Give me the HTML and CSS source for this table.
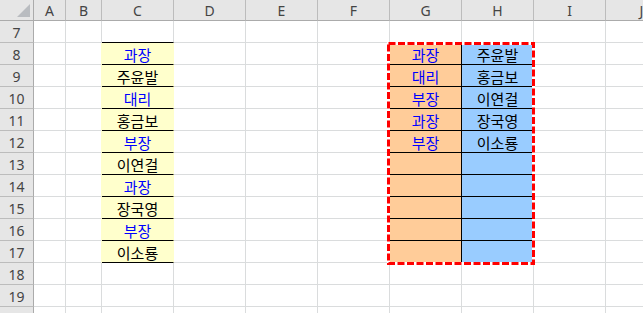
FILE: index.html
```html
<!DOCTYPE html>
<html lang="ko">
<head>
<meta charset="utf-8">
<link rel="stylesheet" href="styles.css">
</head>
<body>
<div class="wrap">
<div class="sheet">
  <div class="corner"><svg class="tri" width="34" height="21" viewBox="0 0 34 21"><polygon points="30,4 30,17 17,17" fill="#b9bcc0"/></svg></div>
  <div class="ch">A</div><div class="ch">B</div><div class="ch">C</div><div class="ch">D</div><div class="ch">E</div><div class="ch">F</div><div class="ch">G</div><div class="ch">H</div><div class="ch">I</div><div class="ch">J</div>

  <div class="rh">7</div><div class="c"></div><div class="c"></div><div class="c bb"></div><div class="c"></div><div class="c"></div><div class="c"></div><div class="c bb"></div><div class="c bb"></div><div class="c"></div><div class="c"></div>

  <div class="rh">8</div><div class="c"></div><div class="c by"></div><div class="c y blue">과장</div><div class="c"></div><div class="c"></div><div class="c br"></div><div class="c g blue">과장</div><div class="c h">주윤발</div><div class="c"></div><div class="c"></div>

  <div class="rh">9</div><div class="c"></div><div class="c by"></div><div class="c y">주윤발</div><div class="c"></div><div class="c"></div><div class="c br"></div><div class="c g blue">대리</div><div class="c h">홍금보</div><div class="c"></div><div class="c"></div>

  <div class="rh">10</div><div class="c"></div><div class="c by"></div><div class="c y blue">대리</div><div class="c"></div><div class="c"></div><div class="c br"></div><div class="c g blue">부장</div><div class="c h">이연걸</div><div class="c"></div><div class="c"></div>

  <div class="rh">11</div><div class="c"></div><div class="c by"></div><div class="c y">홍금보</div><div class="c"></div><div class="c"></div><div class="c br"></div><div class="c g blue">과장</div><div class="c h">장국영</div><div class="c"></div><div class="c"></div>

  <div class="rh">12</div><div class="c"></div><div class="c by"></div><div class="c y blue">부장</div><div class="c"></div><div class="c"></div><div class="c br"></div><div class="c g blue">부장</div><div class="c h">이소룡</div><div class="c"></div><div class="c"></div>

  <div class="rh">13</div><div class="c"></div><div class="c by"></div><div class="c y">이연걸</div><div class="c"></div><div class="c"></div><div class="c br"></div><div class="c g"></div><div class="c h"></div><div class="c"></div><div class="c"></div>

  <div class="rh">14</div><div class="c"></div><div class="c by"></div><div class="c y blue">과장</div><div class="c"></div><div class="c"></div><div class="c br"></div><div class="c g"></div><div class="c h"></div><div class="c"></div><div class="c"></div>

  <div class="rh">15</div><div class="c"></div><div class="c by"></div><div class="c y">장국영</div><div class="c"></div><div class="c"></div><div class="c br"></div><div class="c g"></div><div class="c h"></div><div class="c"></div><div class="c"></div>

  <div class="rh">16</div><div class="c"></div><div class="c by"></div><div class="c y blue">부장</div><div class="c"></div><div class="c"></div><div class="c br"></div><div class="c g"></div><div class="c h"></div><div class="c"></div><div class="c"></div>

  <div class="rh">17</div><div class="c"></div><div class="c by"></div><div class="c y">이소룡</div><div class="c"></div><div class="c"></div><div class="c br"></div><div class="c g"></div><div class="c h"></div><div class="c"></div><div class="c"></div>

  <div class="rh">18</div><div class="c"></div><div class="c"></div><div class="c"></div><div class="c"></div><div class="c"></div><div class="c"></div><div class="c"></div><div class="c"></div><div class="c"></div><div class="c"></div>

  <div class="rh">19</div><div class="c"></div><div class="c"></div><div class="c"></div><div class="c"></div><div class="c"></div><div class="c"></div><div class="c"></div><div class="c"></div><div class="c"></div><div class="c"></div>

  <div class="rh"></div><div class="c"></div><div class="c"></div><div class="c"></div><div class="c"></div><div class="c"></div><div class="c"></div><div class="c"></div><div class="c"></div><div class="c"></div><div class="c"></div>
</div>
<svg class="marquee" width="643" height="313" viewBox="0 0 643 313">
  <rect x="388.5" y="43.5" width="145" height="220" fill="none" stroke="#ffffff" stroke-width="3"/>
  <rect x="388.5" y="43.5" width="145" height="220" fill="none" stroke="#ff0000" stroke-width="3" stroke-dasharray="7 2.5"/>
</svg>
</div>
</body>
</html>
```
FILE: styles.css
```css
html, body {
  margin: 0;
  padding: 0;
  background: #ffffff;
  overflow: hidden;
}
.wrap {
  position: relative;
  width: 643px;
  height: 313px;
  overflow: hidden;
}
.sheet {
  display: grid;
  grid-template-columns: 34px 32px 36px repeat(8, 72px);
  grid-template-rows: 21px;
  grid-auto-rows: 22px;
  width: 678px;
  font-family: "Noto Sans CJK KR", "Noto Sans", sans-serif;
}
.sheet > div {
  box-sizing: border-box;
  border-right: 1px solid #dadcdd;
  border-bottom: 1px solid #dadcdd;
  display: flex;
  align-items: center;
  justify-content: center;
  overflow: hidden;
  white-space: nowrap;
}
.corner {
  position: relative;
  background: #e6e6e6;
  border-right-color: #ababab !important;
  border-bottom-color: #ababab !important;
}
.tri {
  position: absolute;
  left: 0;
  top: 0;
}
.ch {
  background: #e6e6e6;
  border-right-color: #bcbcbc !important;
  border-bottom-color: #ababab !important;
  color: #444444;
  font-family: "Noto Sans", sans-serif;
  font-size: 14px;
  padding-top: 1px;
}
.rh {
  background: #e6e6e6;
  border-right-color: #ababab !important;
  border-bottom-color: #bcbcbc !important;
  color: #444444;
  font-family: "Noto Sans", sans-serif;
  font-size: 14px;
  padding-top: 1px;
}
.c {
  font-size: 15px;
  color: #000000;
  padding-top: 1px;
}
.blue {
  color: #0000ff !important;
}
.bb {
  border-bottom-color: #000000 !important;
}
.br {
  border-right-color: #000000 !important;
}
.by {
  border-right-color: #ffffcc !important;
}
.y {
  background: #ffffcc;
  border-right-color: #ffffcc !important;
  border-bottom-color: #000000 !important;
}
.g {
  background: #ffcc99;
  border-right-color: #000000 !important;
  border-bottom-color: #000000 !important;
}
.h {
  background: #99ccff;
  border-right-color: #000000 !important;
  border-bottom-color: #000000 !important;
}
.marquee {
  position: absolute;
  left: 0;
  top: 0;
  pointer-events: none;
}
```
